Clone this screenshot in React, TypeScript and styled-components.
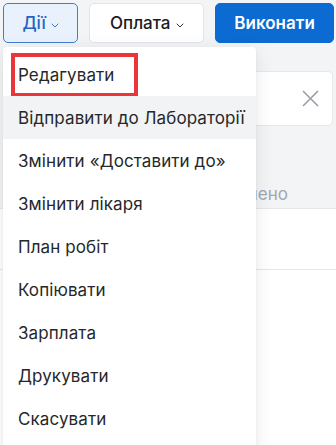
import { FC } from 'react';
import styled, { createGlobalStyle } from 'styled-components';

const GlobalStyle = createGlobalStyle`
  html, body {
    margin: 0;
    padding: 0;
    background: #f3f4f6;
    font-family: Inter, 'Noto Sans', sans-serif;
    overflow: hidden;
  }
`;

const Page = styled.div`
  position: relative;
  width: 336px;
  height: 445px;
  background: #f3f4f6;
  overflow: hidden;
`;

const Toolbar = styled.div`
  display: flex;
  gap: 11px;
  padding: 3px 2px 0 3px;
`;

const ToolButton = styled.button<{ $variant: 'active' | 'plain' | 'primary'; $width: number }>`
  height: 40px;
  width: ${props => props.$width}px;
  border-radius: 5px;
  display: flex;
  align-items: center;
  justify-content: center;
  gap: 5px;
  font-family: inherit;
  font-size: 17px;
  cursor: pointer;
  border: 1px solid
    ${props =>
      props.$variant === 'active' ? '#3f7fd0' : props.$variant === 'primary' ? '#0b6bd3' : '#e2e4e8'};
  background: ${props =>
    props.$variant === 'active' ? '#e9f1fc' : props.$variant === 'primary' ? '#0b6bd3' : '#ffffff'};
  color: ${props =>
    props.$variant === 'active' ? '#1f63c4' : props.$variant === 'primary' ? '#ffffff' : '#1c1c1e'};
  font-weight: ${props => (props.$variant === 'primary' ? 600 : 500)};
`;

const Chevron = styled.svg`
  width: 8px;
  height: 5px;
  margin-top: 4px;
`;

const Content = styled.div`
  display: flex;
  flex-direction: column;
  padding-top: 28px;
`;

const SearchCard = styled.div`
  margin-left: 150px;
  margin-right: 3px;
  height: 53px;
  background: #ffffff;
  border: 1px solid #e6e8ec;
  border-radius: 5px;
  display: flex;
  align-items: center;
  justify-content: flex-end;
  padding-right: 12px;
`;

const CloseIcon = styled.svg`
  width: 19px;
  height: 19px;
`;

const TabRow = styled.div`
  height: 82px;
  display: flex;
  align-items: flex-end;
  justify-content: flex-end;
  padding-right: 48px;
  border-bottom: 1px solid #e5e7eb;
`;

const TabLabel = styled.span`
  color: #a2a7b0;
  font-size: 17px;
  padding-bottom: 4px;
`;

const ListRow = styled.div<{ $last?: boolean }>`
  height: ${props => (props.$last ? 200 : 60)}px;
  background: #ffffff;
  border-bottom: ${props => (props.$last ? 'none' : '1px solid #e5e7eb')};
`;

const Menu = styled.div`
  position: absolute;
  top: 47px;
  left: 3px;
  width: 253px;
  height: 420px;
  padding-top: 6px;
  background: #ffffff;
  border-radius: 4px;
  box-shadow: 0 4px 20px rgba(0, 0, 0, 0.09), 0 1px 3px rgba(0, 0, 0, 0.05);
`;

const MenuItem = styled.div<{ $hovered?: boolean }>`
  position: relative;
  height: 43px;
  display: flex;
  align-items: center;
  padding-left: 15px;
  font-size: 17px;
  letter-spacing: 0.1px;
  color: #26272a;
  background: ${props => (props.$hovered ? '#f2f3f5' : 'transparent')};
`;

const Highlight = styled.div`
  position: absolute;
  left: 8px;
  top: 0px;
  width: 119px;
  height: 36px;
  border: 4px solid #e8363a;
`;

const items = [
  'Редагувати',
  'Відправити до Лабораторії',
  'Змінити «Доставити до»',
  'Змінити лікаря',
  'План робіт',
  'Копіювати',
  'Зарплата',
  'Друкувати',
  'Скасувати',
];

const Down: FC<{ color: string }> = ({ color }) => (
  <Chevron viewBox="0 0 8 5" fill="none">
    <path d="M1 1L4 4L7 1" stroke={color} strokeWidth="1" strokeLinecap="round" />
  </Chevron>
);

export default function App() {
  return (
    <Page>
      <GlobalStyle />
      <Toolbar>
        <ToolButton $variant="active" $width={76}>
          Дії
          <Down color="#3f7fd0" />
        </ToolButton>
        <ToolButton $variant="plain" $width={116}>
          Оплата
          <Down color="#333" />
        </ToolButton>
        <ToolButton $variant="primary" $width={120}>
          Виконати
        </ToolButton>
      </Toolbar>

      <Content>
        <SearchCard>
          <CloseIcon viewBox="0 0 19 19">
            <path d="M2 2L17 17M17 2L2 17" stroke="#9a9ea5" strokeWidth="1.6" />
          </CloseIcon>
        </SearchCard>
        <TabRow>
          <TabLabel>Завершено</TabLabel>
        </TabRow>
        <ListRow />
        <ListRow $last />
      </Content>

      <Menu>
        {items.map((label, i) => (
          <MenuItem key={label} $hovered={i === 1}>
            {i === 0 && <Highlight />}
            {label}
          </MenuItem>
        ))}
      </Menu>
    </Page>
  );
}
